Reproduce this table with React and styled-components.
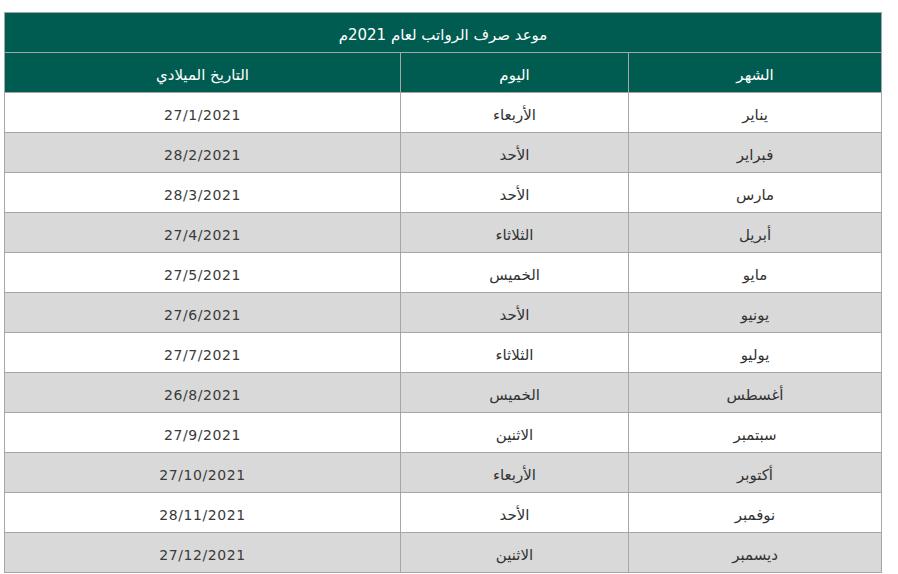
import styled, { createGlobalStyle } from "styled-components";

const GlobalStyle = createGlobalStyle`
  html, body {
    margin: 0;
    padding: 0;
    background: #ffffff;
  }
`;

const Page = styled.div`
  padding: 12px 16px 0 4px;
  font-family: "DejaVu Sans", sans-serif;
`;

const Table = styled.table`
  width: 877px;
  border-collapse: collapse;
  direction: rtl;
  table-layout: fixed;
  font-size: 15px;
  color: #333333;
`;

const Col = styled.col`
  width: ${(props) => props.w}px;
`;

const TitleCell = styled.th`
  height: 40px;
  box-sizing: border-box;
  padding: 4px 0 0;
  background: #005c50;
  color: #ffffff;
  font-weight: normal;
  font-size: 15px;
  border: 1px solid #a6a6a6;
  text-align: center;
`;

const HeadCell = styled.th`
  height: 40px;
  box-sizing: border-box;
  padding: 4px 0 0;
  background: #005c50;
  color: #ffffff;
  font-weight: normal;
  font-size: 15px;
  border: 1px solid #a6a6a6;
  text-align: center;
`;

const Row = styled.tr`
  background: ${(props) => (props.shaded ? "#d9d9d9" : "#ffffff")};
`;

const Cell = styled.td`
  height: 40px;
  box-sizing: border-box;
  padding: 4px 0 0;
  border: 1px solid #a6a6a6;
  text-align: center;
`;

const DateText = styled.span`
  font-size: 14px;
  letter-spacing: 0.6px;
  color: #3a3a3a;
`;

const rows = [
  ["يناير", "الأربعاء", "27/1/2021"],
  ["فبراير", "الأحد", "28/2/2021"],
  ["مارس", "الأحد", "28/3/2021"],
  ["أبريل", "الثلاثاء", "27/4/2021"],
  ["مايو", "الخميس", "27/5/2021"],
  ["يونيو", "الأحد", "27/6/2021"],
  ["يوليو", "الثلاثاء", "27/7/2021"],
  ["أغسطس", "الخميس", "26/8/2021"],
  ["سبتمبر", "الاثنين", "27/9/2021"],
  ["أكتوبر", "الأربعاء", "27/10/2021"],
  ["نوفمبر", "الأحد", "28/11/2021"],
  ["ديسمبر", "الاثنين", "27/12/2021"],
];

const App = () => {
  return (
    <Page>
      <GlobalStyle />
      <Table>
        <colgroup>
          <Col w={253} />
          <Col w={228} />
          <Col w={396} />
        </colgroup>
        <thead>
          <tr>
            <TitleCell colSpan={3}>موعد صرف الرواتب لعام 2021م</TitleCell>
          </tr>
          <tr>
            <HeadCell>الشهر</HeadCell>
            <HeadCell>اليوم</HeadCell>
            <HeadCell>التاريخ الميلادي</HeadCell>
          </tr>
        </thead>
        <tbody>
          {rows.map(([month, day, date], i) => (
            <Row key={month} shaded={i % 2 === 1}>
              <Cell>{month}</Cell>
              <Cell>{day}</Cell>
              <Cell>
                <DateText>{date}</DateText>
              </Cell>
            </Row>
          ))}
        </tbody>
      </Table>
    </Page>
  );
};

export default App;
